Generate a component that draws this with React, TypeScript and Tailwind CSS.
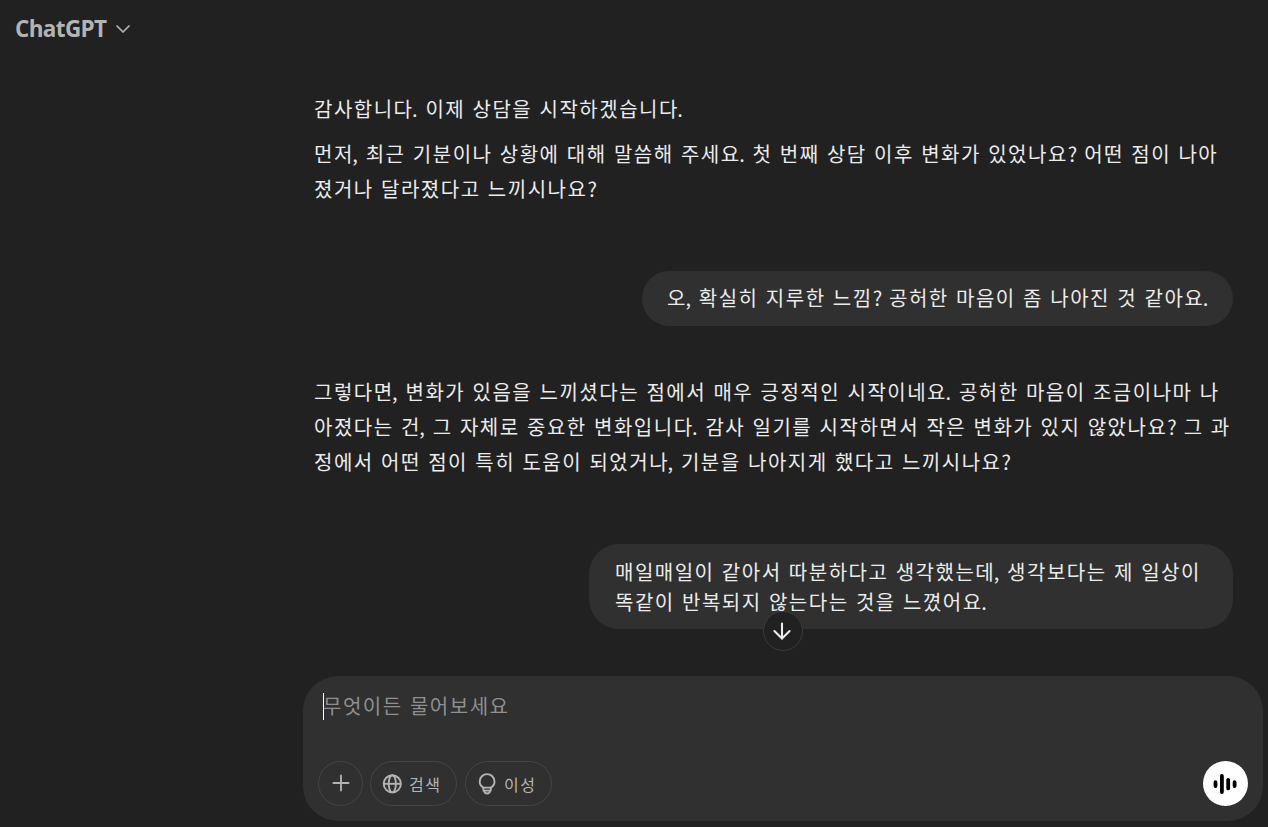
import { ArrowDown, ChevronDown, Plus } from 'lucide-react';

// Punctuation sits tighter to its neighbours than the syllables do
function Line({ text, className = '' }: { text: string; className?: string }) {
  return (
    <span className={`block whitespace-nowrap tracking-[1.5px] [word-spacing:1.35px] ${className}`}>
      {text.split(/([.,?])/).map((part, i) => {
        if (i % 2 === 0) return part;
        return (
          <span key={i} className={part === '?' ? 'tracking-[-0.5px]' : '-ml-[1.5px] tracking-[0.5px]'}>
            {part}
          </span>
        );
      })}
    </span>
  );
}

function GlobeIcon() {
  return (
    <svg width="20" height="20" viewBox="0 0 20 20" fill="none" stroke="currentColor" strokeWidth="1.9">
      <circle cx="10.3" cy="9.8" r="8.6" />
      <ellipse cx="10.3" cy="9.8" rx="3.6" ry="8.6" />
      <path d="M1.7 9.8h17.2" />
    </svg>
  );
}

function BulbIcon() {
  return (
    <svg width="18" height="22" viewBox="0 0 18 22" fill="none" stroke="currentColor" strokeWidth="1.9" strokeLinejoin="round">
      <path d="M5.4 14.6C3 13.3 1.7 11.1 1.700 8.500a7.400 7.400 0 0 1 14.800 0c0 2.600-1.300 4.800-3.700 6.100z" />
      <path d="M5.400 14.600v3h7.400v-3M5.900 17.600c.4 1.900 1.700 2.900 3.200 2.900s2.800-1 3.200-2.900" />
    </svg>
  );
}

function VoiceIcon() {
  return (
    <svg width="24" height="22" viewBox="0 0 24 22" stroke="currentColor" strokeWidth="3.8" strokeLinecap="round">
      <path d="M2.500 9.200v3.800M8.900 3v16M15.200 6.800v8.600M21.600 9.200v3.800" />
    </svg>
  );
}

export default function App() {
  return (
    <div className="flex h-[827px] w-[1268px] flex-col overflow-hidden bg-[#212121] font-['Noto_Sans_CJK_KR',sans-serif] text-[20px] text-[#ececec]">
      <header className="flex h-[57px] shrink-0 items-center gap-[5px] pl-[15px] text-[#b4b4b4]">
        <h1 className="w-[91px] font-['Open_Sans',sans-serif] text-[22.5px] font-bold tracking-[-0.65px]">ChatGPT</h1>
        <ChevronDown size={24} strokeWidth={1.7} />
      </header>

      {/* Conversation */}
      <main className="flex h-[619px] shrink-0 flex-col pt-[34px] pr-[35px] pl-[314px]">
        <div className="flex flex-col gap-[10px] leading-[35px]">
          <p>
            <Line text="감사합니다. 이제 상담을 시작하겠습니다." />
          </p>
          <p>
            <Line text="먼저, 최근 기분이나 상황에 대해 말씀해 주세요. 첫 번째 상담 이후 변화가 있었나요? 어떤 점이 나아" />
            <Line text="졌거나 달라졌다고 느끼시나요?" />
          </p>
        </div>

        <div className="mt-[65px] h-[55px] w-[591px] shrink-0 self-end rounded-[28px] bg-[#303030] pt-[12px] pl-[25px] leading-[30px]">
          <Line text="오, 확실히 지루한 느낌? 공허한 마음이 좀 나아진 것 같아요." />
        </div>

        <p className="mt-[48px] leading-[35px]">
          <Line text="그렇다면, 변화가 있음을 느끼셨다는 점에서 매우 긍정적인 시작이네요. 공허한 마음이 조금이나마 나" />
          <Line text="아졌다는 건, 그 자체로 중요한 변화입니다. 감사 일기를 시작하면서 작은 변화가 있지 않았나요? 그 과" />
          <Line text="정에서 어떤 점이 특히 도움이 되었거나, 기분을 나아지게 했다고 느끼시나요?" />
        </p>

        <div className="relative mt-[65px] h-[85px] w-[644px] shrink-0 self-end rounded-[30px] bg-[#303030] pt-[13px] pl-[26px] leading-[30px]">
          <Line text="매일매일이 같아서 따분하다고 생각했는데, 생각보다는 제 일상이" />
          <Line text="똑같이 반복되지 않는다는 것을 느꼈어요." />
          <button className="absolute top-[67px] left-[174px] flex size-10 items-center justify-center rounded-full border border-[#3a3a3a] bg-[#212121] pr-[2px]">
            <ArrowDown size={26} strokeWidth={1.9} />
          </button>
        </div>
      </main>

      {/* Composer */}
      <footer className="mr-[5px] ml-[303px] flex h-[145px] shrink-0 flex-col justify-between rounded-[35px] bg-[#303030] p-[15px]">
        <div className="flex h-[30px] items-center pl-[5px] text-[#8f8f8f]">
          <span className="h-[27px] w-px shrink-0 bg-white" />
          <Line className="-ml-px" text="무엇이든 물어보세요" />
        </div>
        <div className="flex items-center text-[#b4b4b4]">
          <button className="flex size-[45px] items-center justify-center rounded-full border border-[#454545] pb-px">
            <Plus size={26} strokeWidth={1.7} />
          </button>
          <button className="ml-[7px] flex h-[45px] w-[87px] items-center gap-[7px] rounded-full border border-[#454545] pl-[11px] text-[16px]">
            <GlobeIcon />
            <Line text="검색" />
          </button>
          <button className="ml-2 flex h-[45px] w-[87px] items-center gap-[8px] rounded-full border border-[#454545] pl-[12px] text-[16px]">
            <BulbIcon />
            <Line text="이성" />
          </button>
          <button className="ml-auto flex size-[45px] items-center justify-center rounded-full bg-white pr-px text-black">
            <VoiceIcon />
          </button>
        </div>
      </footer>
    </div>
  );
}
